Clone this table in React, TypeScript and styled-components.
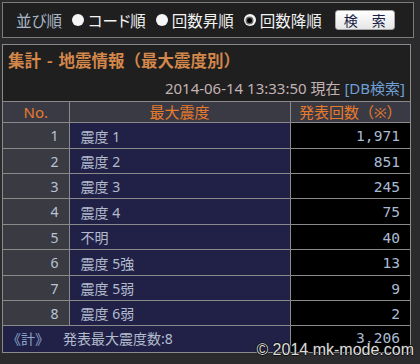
import React from "react";
import styled, { createGlobalStyle } from "styled-components";

const Global = createGlobalStyle`
  html, body { margin: 0; padding: 0; background: #2b2b2e; }
  body { font-family: "Noto Sans", "Noto Sans CJK JP", sans-serif; }
  * { box-sizing: border-box; }
`;

const Page = styled.div`
  position: relative;
  width: 420px;
  height: 364px;
  padding: 2px;
  overflow: hidden;
`;

const SortBar = styled.form`
  display: flex;
  align-items: center;
  width: 412px;
  height: 36px;
  padding-left: 13px;
  background: #1f1f1f;
  border: 1px solid #7c7c7c;
  font-feature-settings: "palt";
`;

const SortLabel = styled.span`
  font-size: 15.5px;
  color: #a9b6c6;
  margin-right: 10px;
`;

const Option = styled.label`
  display: flex;
  align-items: center;
  margin-right: 10px;
  font-size: 15.5px;
  color: #f2f2f2;
`;

const Radio = styled.span<{ $checked?: boolean }>`
  position: relative;
  display: inline-block;
  width: 12px;
  height: 12px;
  margin-right: 4px;
  border-radius: 50%;
  background: #f6f6f6;
  &::after {
    content: "";
    display: ${(p) => (p.$checked ? "block" : "none")};
    position: absolute;
    left: 3.5px;
    top: 3.5px;
    width: 5px;
    height: 5px;
    border-radius: 50%;
    background: #000;
    box-shadow: 0 0 0 1.5px #6a6a6a;
  }
`;

const SearchButton = styled.button`
  width: 60px;
  height: 20px;
  margin-left: 3px;
  padding: 0;
  border: 1px solid #a8a8a8;
  border-radius: 3px;
  background: linear-gradient(#ffffff, #e6e6e6);
  font-family: "Noto Sans CJK JP", sans-serif;
  font-size: 14px;
  line-height: 18px;
  color: #1a1e48;
`;

const Panel = styled.section`
  width: 409px;
  margin-top: 6px;
  background: #1f1f1f;
  border: 1px solid #8a8a8a;
`;

const Title = styled.h1`
  margin: 0;
  padding: 5px 0 0 5px;
  font-family: "Noto Sans CJK JP", sans-serif;
  font-size: 16.5px;
  font-weight: bold;
  line-height: 20px;
  color: #d4874a;
  word-spacing: 2px;
`;

const Stamp = styled.div`
  padding: 9px 5px 4px 0;
  text-align: right;
  font-size: 15px;
  line-height: 18px;
  color: #c2b2b4;
`;

const DbLink = styled.a`
  color: #6f9fd4;
  text-decoration: none;
`;

const Table = styled.table`
  width: 100%;
  table-layout: fixed;
  border-collapse: collapse;
  border-style: solid hidden hidden hidden;
  border-width: 1px;
  border-color: #8a8a8a;
`;

const HeadCell = styled.th`
  height: 21px;
  padding: 0;
  background: #3a3a44;
  border: 1px solid #8a8a8a;
  font-size: 15px;
  font-weight: normal;
  line-height: 20px;
  color: #e87a2c;
`;

const Row = styled.tr<{ $h: number }>`
  height: ${(p) => p.$h}px;
`;

const NoCell = styled.td`
  padding: 0 10px 0 0;
  background: #3a3a42;
  border: 1px solid #8a8a8a;
  text-align: right;
  font-size: 14px;
  color: #b9c4d4;
`;

const NameCell = styled.td<{ $foot?: boolean }>`
  padding: ${(p) => (p.$foot ? "0 0 2px 4px" : "0 0 0 11px")};
  background: #212147;
  border: 1px solid #8a8a8a;
  font-size: 14px;
  color: #b3bccd;
  white-space: pre;
`;

const CountCell = styled.td<{ $foot?: boolean }>`
  padding: ${(p) => (p.$foot ? "0 10px 3px 0" : "0 10px 0 0")};
  background: #000;
  border: 1px solid #8a8a8a;
  text-align: right;
  font-family: "DejaVu Sans Mono", monospace;
  font-size: 14.6px;
  color: #a9bbd3;
`;

const FootMark = styled.span`
  color: #8ea6d0;
  margin-right: 14px;
`;

const Watermark = styled.div`
  position: absolute;
  right: 6px;
  top: 341px;
  font-family: "Liberation Sans", Arial, sans-serif;
  font-size: 16px;
  line-height: 18px;
  color: #dcdcdc;
  text-shadow: -1px 0 #111, 1px 0 #111, 0 -1px #111, 0 1px #111;
`;

const rows = [
  { no: 1, name: "震度 1", count: "1,971" },
  { no: 2, name: "震度 2", count: "851" },
  { no: 3, name: "震度 3", count: "245" },
  { no: 4, name: "震度 4", count: "75" },
  { no: 5, name: "不明", count: "40" },
  { no: 6, name: "震度 5強", count: "13" },
  { no: 7, name: "震度 5弱", count: "9" },
  { no: 8, name: "震度 6弱", count: "2" },
];

const heights = [26, 25, 25, 26, 25, 26, 25, 25];

export default function App() {
  return (
    <Page>
      <Global />
      <SortBar onSubmit={(e) => e.preventDefault()}>
        <SortLabel>並び順</SortLabel>
        <Option>
          <Radio />
          コード順
        </Option>
        <Option>
          <Radio />
          回数昇順
        </Option>
        <Option>
          <Radio $checked />
          回数降順
        </Option>
        <SearchButton type="submit">検　索</SearchButton>
      </SortBar>
      <Panel>
        <Title>集計 - 地震情報（最大震度別）</Title>
        <Stamp>
          2014-06-14 13:33:50 現在 <DbLink href="#">[DB検索]</DbLink>
        </Stamp>
        <Table>
          <colgroup>
            <col style={{ width: 66 }} />
            <col style={{ width: 221 }} />
            <col style={{ width: 120 }} />
          </colgroup>
          <thead>
            <tr>
              <HeadCell>No.</HeadCell>
              <HeadCell>最大震度</HeadCell>
              <HeadCell>発表回数（※）</HeadCell>
            </tr>
          </thead>
          <tbody>
            {rows.map((r, i) => (
              <Row key={r.no} $h={heights[i]}>
                <NoCell>{r.no}</NoCell>
                <NameCell>{r.name}</NameCell>
                <CountCell>{r.count}</CountCell>
              </Row>
            ))}
            <Row $h={26}>
              <NameCell colSpan={2} $foot>
                <FootMark>《計》</FootMark>発表最大震度数:8
              </NameCell>
              <CountCell $foot>3,206</CountCell>
            </Row>
          </tbody>
        </Table>
      </Panel>
      <Watermark>© 2014 mk-mode.com</Watermark>
    </Page>
  );
}
